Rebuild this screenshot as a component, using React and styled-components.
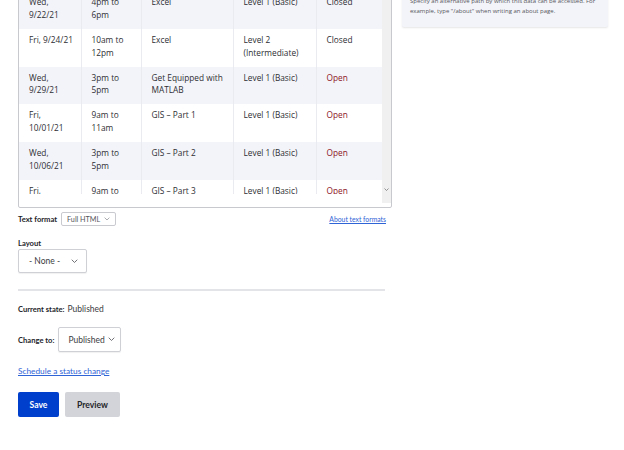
import React from "react";
import styled, { createGlobalStyle } from "styled-components";

const Global = createGlobalStyle`
  html, body { margin: 0; padding: 0; background: #fff; }
  body { font-family: Lato, "Open Sans", sans-serif; color: #232429; overflow: hidden; }
`;

const Page = styled.div`
  display: flex;
  align-items: flex-start;
  margin-top: -12px;
  padding-left: 18px;
  gap: 10px;
`;

const Main = styled.div`
  width: 374px;
  display: flex;
  flex-direction: column;
`;

const Frame = styled.div`
  border: 1px solid #c8c9cf;
  border-radius: 0 0 2px 2px;
  display: flex;
  background: #fff;
`;

const Content = styled.div`
  width: 363px;
  padding-bottom: 13px;
`;

const Clip = styled.div`
  height: 205px;
  overflow: hidden;
`;

const Table = styled.table`
  margin-top: 2px;
  width: 363px;
  border-collapse: collapse;
  table-layout: fixed;
  font-family: "Open Sans", sans-serif;
  font-size: 8.3px;
  line-height: 12.8px;
`;

const Row = styled.tr`
  background: ${(p) => (p.$striped ? "#f3f4f9" : "#fff")};
`;

const Cell = styled.td`
  vertical-align: top;
  padding: 5px 4px 7.2px 10px;
  color: ${(p) => (p.$open ? "#8c1426" : "#2d2e33")};
  border-right: 1px solid ${(p) => (p.$last ? "transparent" : "#eaebf0")};
`;

const Scrollbar = styled.div`
  width: 9px;
  background: #f0f0f0;
  margin-bottom: 4px;
  display: flex;
  flex-direction: column;
  justify-content: flex-end;
  align-items: center;
  padding-bottom: 12px;
`;

const FormatRow = styled.div`
  display: flex;
  align-items: center;
  margin-top: 4px;
  padding-right: 6px;
  height: 14px;
`;

const Label = styled.span`
  font-weight: 700;
  font-size: 7.6px;
  line-height: 10px;
  color: #232429;
`;

const SmallSelect = styled.div`
  margin-left: 4px;
  height: 14px;
  box-sizing: border-box;
  border: 1px solid #c9cad0;
  border-radius: 2px;
  display: flex;
  align-items: center;
  gap: 4px;
  padding: 0 5px 0 5px;
  font-size: 7.2px;
  color: #55565b;
`;

const FormatLink = styled.a`
  margin-left: auto;
  font-size: 6.8px;
  color: #2f64d6;
  text-decoration: underline;
`;

const BlockLabel = styled(Label)`
  display: block;
  margin-top: 12px;
  margin-bottom: 1px;
`;

const Select = styled.div`
  box-sizing: border-box;
  height: ${(p) => p.$h || 24}px;
  width: ${(p) => p.$w}px;
  border: 1px solid #cfd0d6;
  border-radius: 2px;
  box-shadow: 0 1px 1px rgba(0, 0, 0, 0.06);
  display: flex;
  align-items: center;
  justify-content: space-between;
  gap: 3px;
  padding: 0 8px 0 ${(p) => p.$pl || 10}px;
  font-size: 8.5px;
  color: #3b3c41;
  background: #fff;
  white-space: nowrap;
`;

const Rule = styled.div`
  margin-top: 16px;
  height: 2px;
  width: 367px;
  background: #e3e4e8;
`;

const StateLine = styled.div`
  margin-top: 12px;
  display: flex;
  align-items: baseline;
  gap: 3px;
  line-height: 12px;
`;

const Value = styled.span`
  font-size: 8.5px;
  color: #3b3c41;
`;

const ChangeRow = styled.div`
  margin-top: 12px;
  display: flex;
  align-items: center;
  gap: 4px;
`;

const StatusLink = styled.a`
  margin-top: 13px;
  font-size: 8.3px;
  line-height: 12px;
  color: #2f64d6;
  text-decoration: underline;
`;

const Buttons = styled.div`
  margin-top: 15px;
  display: flex;
  gap: 6px;
`;

const Button = styled.button`
  height: 25px;
  width: ${(p) => p.$w}px;
  border: 0;
  border-radius: 2px;
  font-family: inherit;
  font-weight: 700;
  font-size: 8.6px;
  background: ${(p) => (p.$primary ? "#003ecc" : "#d3d4d9")};
  color: ${(p) => (p.$primary ? "#fff" : "#232429")};
  padding: 0;
`;

const Card = styled.div`
  width: 190px;
  background: #f3f4f9;
  border-radius: 2px;
  box-shadow: 0 1px 2px rgba(0, 0, 0, 0.1);
  padding: 8px 8px 11px 8px;
  font-family: "Open Sans", sans-serif;
  font-size: 6px;
  line-height: 10px;
  color: #55565b;
`;

const ChevronSvg = styled.svg`
  flex-shrink: 0;
  display: block;
`;

const Chevron = ({ size = 7, color = "#55565b" }) => (
  <ChevronSvg width={size} height={size * 0.6} viewBox="0 0 10 6">
    <polyline points="1,1 5,5 9,1" fill="none" stroke={color} strokeWidth="1.2" />
  </ChevronSvg>
);

const rows = [
  ["Wed, 9/22/21", "4pm to 6pm", "Excel", "Level 1 (Basic)", "Closed"],
  ["Fri, 9/24/21", "10am to 12pm", "Excel", "Level 2 (Intermediate)", "Closed"],
  ["Wed, 9/29/21", "3pm to 5pm", "Get Equipped with MATLAB", "Level 1 (Basic)", "Open"],
  ["Fri, 10/01/21", "9am to 11am", "GIS – Part 1", "Level 1 (Basic)", "Open"],
  ["Wed, 10/06/21", "3pm to 5pm", "GIS – Part 2", "Level 1 (Basic)", "Open"],
  ["Fri, 10/08/21", "9am to 11am", "GIS – Part 3", "Level 1 (Basic)", "Open"],
];

const widths = [62, 60, 92, 83, 66];

export default function App() {
  return (
    <>
      <Global />
      <Page>
        <Main>
          <Frame>
            <Content>
              <Clip>
                <Table>
                  <colgroup>
                    {widths.map((w, i) => (
                      <col key={i} style={{ width: w }} />
                    ))}
                  </colgroup>
                  <tbody>
                    {rows.map((r, i) => (
                      <Row key={i} $striped={i % 2 === 0}>
                        {r.map((c, j) => (
                          <Cell key={j} $last={j === 4} $open={c === "Open"}>
                            {c}
                          </Cell>
                        ))}
                      </Row>
                    ))}
                  </tbody>
                </Table>
              </Clip>
            </Content>
            <Scrollbar>
              <Chevron size={5} color="#555" />
            </Scrollbar>
          </Frame>

          <FormatRow>
            <Label>Text format</Label>
            <SmallSelect>
              Full HTML <Chevron size={6} color="#8a8b90" />
            </SmallSelect>
            <FormatLink href="#">About text formats</FormatLink>
          </FormatRow>

          <BlockLabel>Layout</BlockLabel>
          <Select $w={69}>
            - None - <Chevron size={7} />
          </Select>

          <Rule />

          <StateLine>
            <Label>Current state:</Label>
            <Value>Published</Value>
          </StateLine>

          <ChangeRow>
            <Label>Change to:</Label>
            <Select $w={63} $h={25} $pl={9}>
              Published <Chevron size={7} />
            </Select>
          </ChangeRow>

          <StatusLink href="#">Schedule a status change</StatusLink>

          <Buttons>
            <Button $primary $w={41}>Save</Button>
            <Button $w={55}>Preview</Button>
          </Buttons>
        </Main>
        <Card>
          Specify an alternative path by which this data can be accessed. For
          example, type "/about" when writing an about page.
        </Card>
      </Page>
    </>
  );
}
